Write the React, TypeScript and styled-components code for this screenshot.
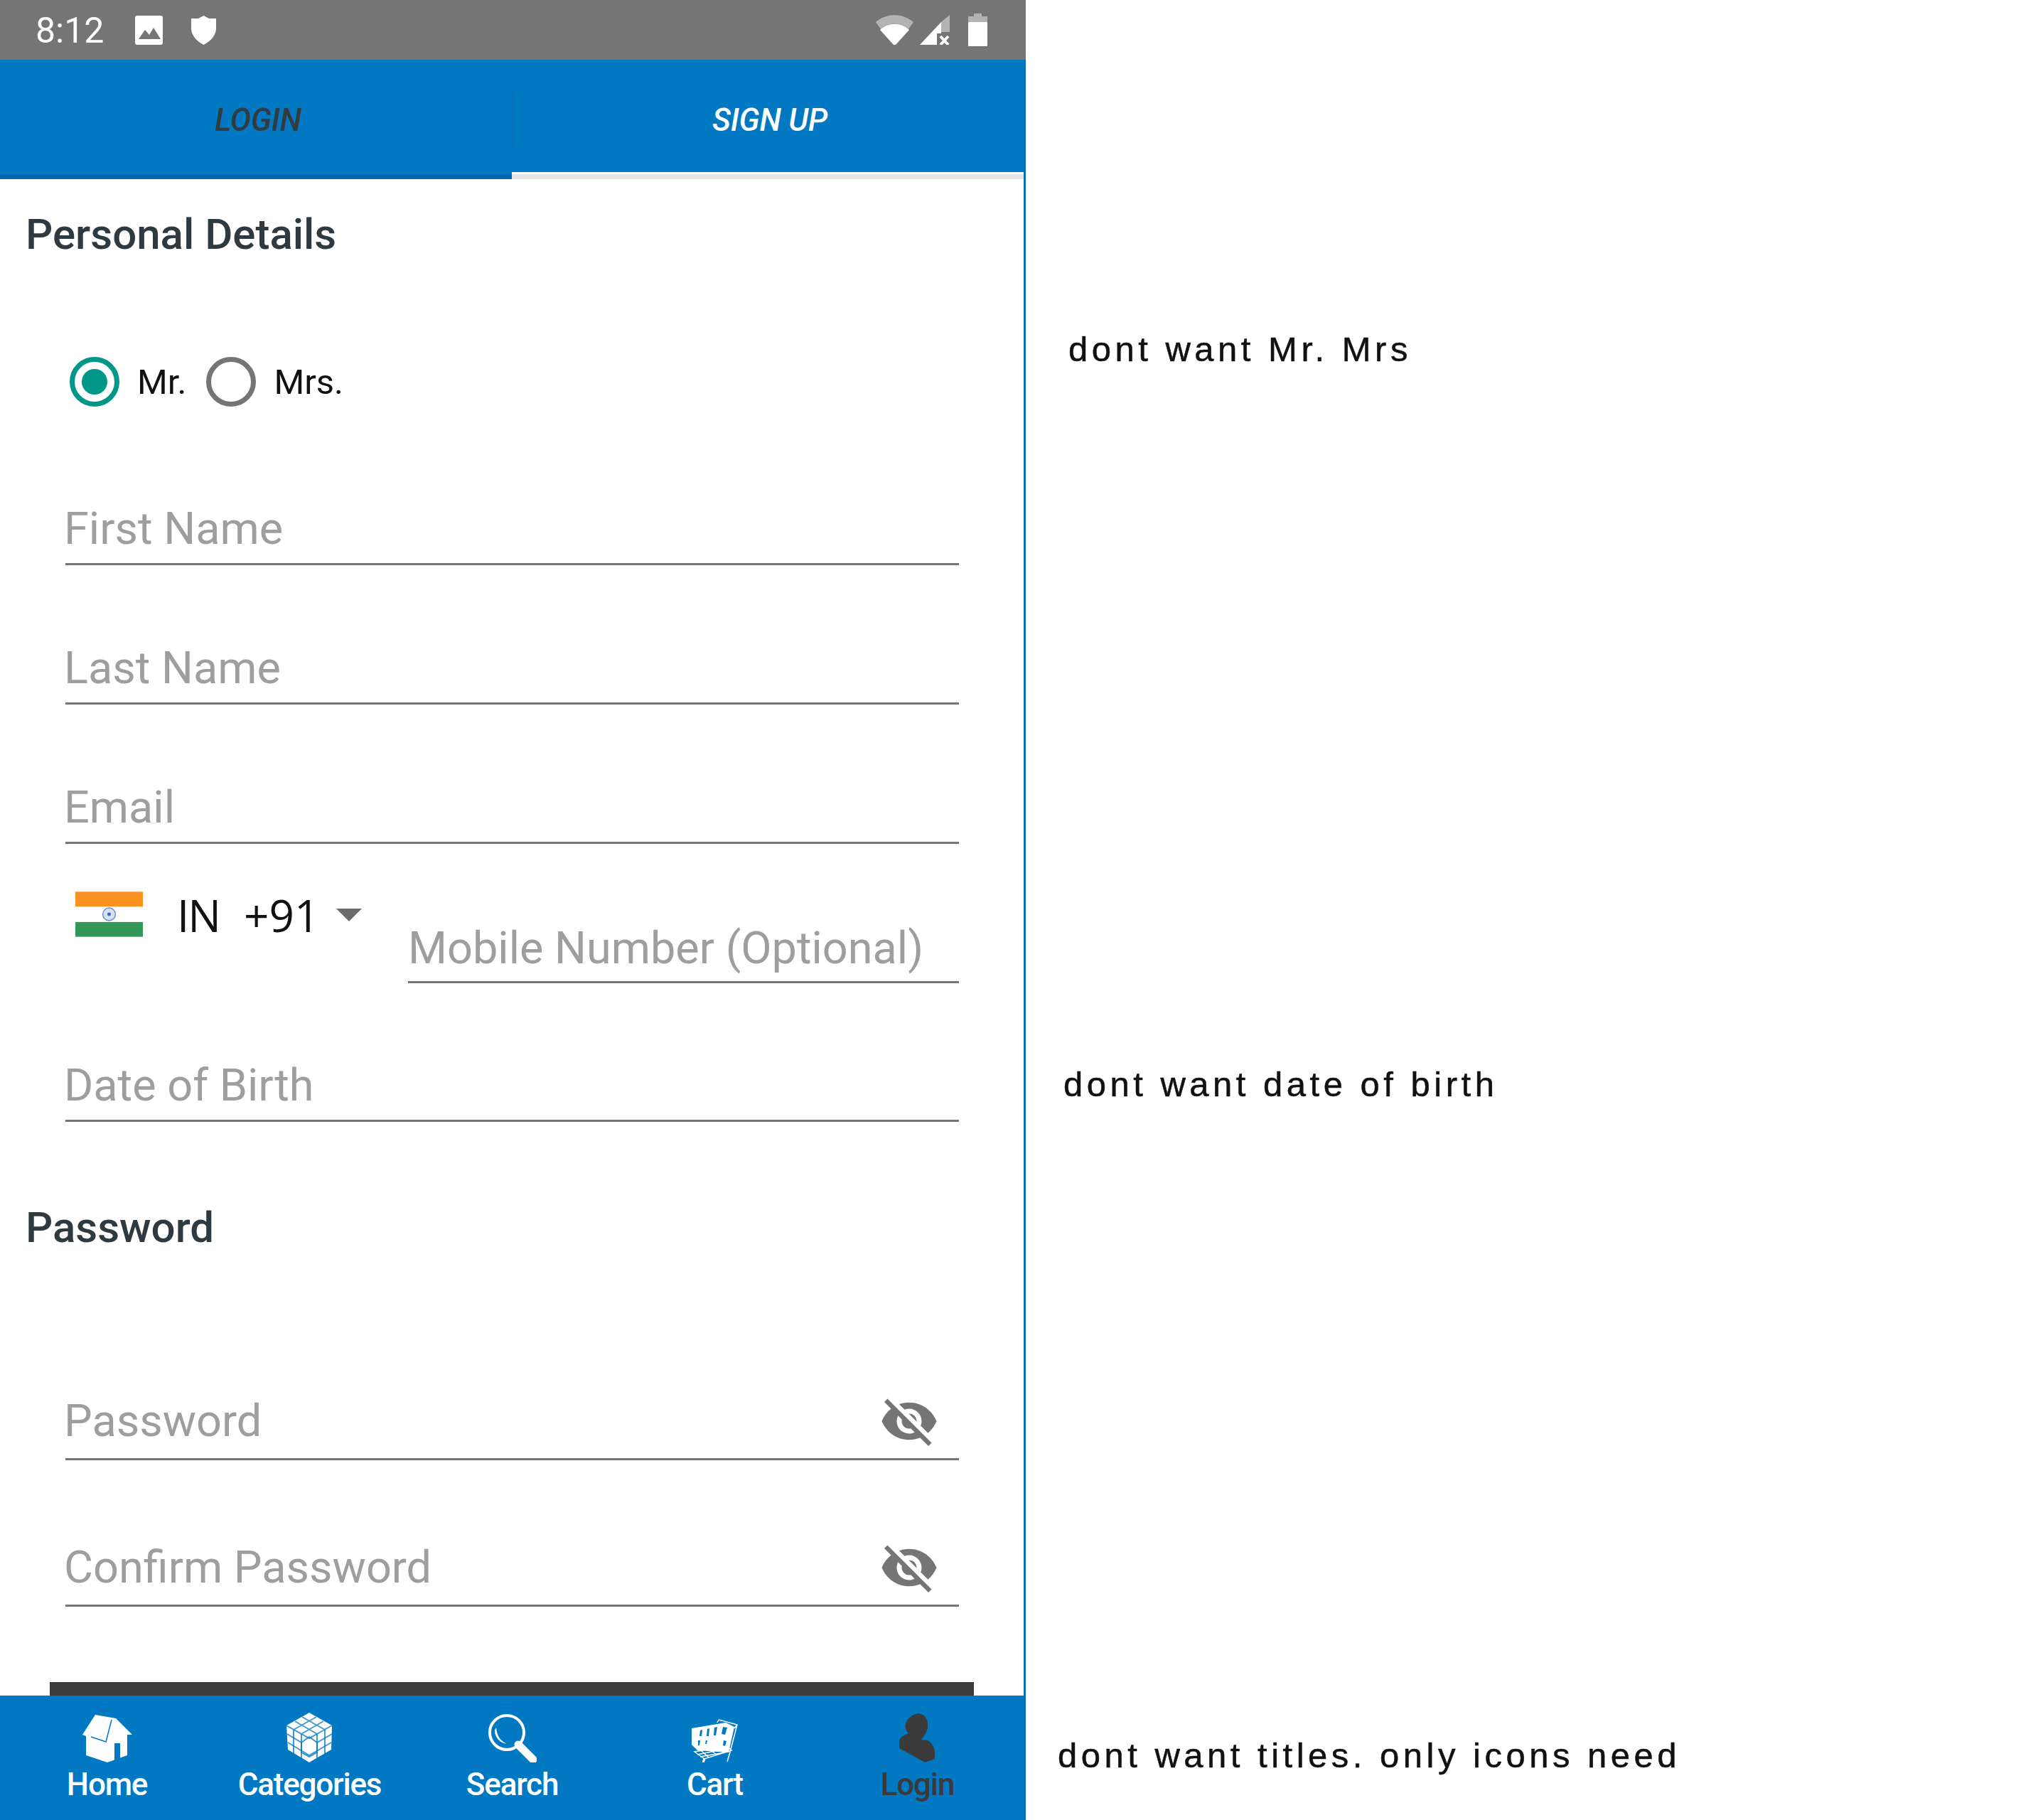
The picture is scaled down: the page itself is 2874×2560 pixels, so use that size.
import React from "react";
import styled, { createGlobalStyle } from "styled-components";
import { MdVisibilityOff } from "react-icons/md";

const Global = createGlobalStyle`
  html, body { margin: 0; padding: 0; background: #fff; }
  * { box-sizing: border-box; }
`;

const Page = styled.div`
  width: 2874px;
  height: 2560px;
  display: flex;
  overflow: hidden;
  background: #fff;
  font-family: Roboto, sans-serif;
`;

const Phone = styled.div`
  width: 1443px;
  height: 2560px;
  flex-shrink: 0;
  display: flex;
  flex-direction: column;
  border-right: 3px solid #0a72ba;
`;

const StatusBar = styled.div`
  height: 84px;
  flex-shrink: 0;
  background: #757575;
  display: flex;
  align-items: center;
  padding: 0 51px 0 50px;
  margin-right: -3px;
  color: #fff;
`;

const Clock = styled.span`
  font-size: 50px;
  line-height: 1;
  width: 140px;
  margin-top: 2px;
`;

const StatusLeftIcon = styled.svg`
  display: block;
  margin-right: 40px;
`;

const StatusRight = styled.div`
  margin-left: auto;
  margin-right: 3px;
  display: flex;
  align-items: center;
  gap: 9px;
`;

const BatteryIcon = styled.svg`
  display: block;
  margin-left: 17px;
`;

const Tabs = styled.div`
  height: 168px;
  flex-shrink: 0;
  display: flex;
`;

const Tab = styled.div<{ $active?: boolean }>`
  position: relative;
  flex: 1;
  display: flex;
  align-items: center;
  justify-content: center;
  padding: 2px 0 0 6px;
  background: #0078c2;
  font-size: 44px;
  font-style: italic;
  font-weight: 500;
  letter-spacing: -0.2px;
  color: ${(p) => (p.$active ? "#ffffff" : "#333b40")};
  box-shadow: ${(p) =>
    p.$active
      ? "inset 0 -7px 0 #e5e3e5, inset 0 -10px 0 #ffffff"
      : "inset 0 -7px 0 #0066b0"};
  &::before {
    content: "";
    display: ${(p) => (p.$active ? "block" : "none")};
    position: absolute;
    left: 0;
    top: 40px;
    bottom: 42px;
    width: 2px;
    background: #0a72ba;
  }
`;

const Form = styled.div`
  flex: 1;
  min-height: 0;
  overflow: hidden;
  display: flex;
  flex-direction: column;
  align-items: flex-start;
  padding-top: 42px;
`;

const Heading = styled.h2<{ $top?: number }>`
  flex-shrink: 0;
  margin: ${(p) => p.$top ?? 0}px 0 0 36px;
  font-size: 60px;
  line-height: 72px;
  font-weight: 500;
  color: #2f3a40;
`;

const RadioRow = styled.div`
  flex-shrink: 0;
  display: flex;
  align-items: center;
  margin: 136px 0 0 98px;
  height: 70px;
`;

const Radio = styled.span<{ $checked?: boolean }>`
  width: 70px;
  height: 70px;
  border-radius: 50%;
  border: 7px solid ${(p) => (p.$checked ? "#009688" : "#757575")};
  display: flex;
  align-items: center;
  justify-content: center;
  &::after {
    content: "";
    width: 36px;
    height: 36px;
    border-radius: 50%;
    background: ${(p) => (p.$checked ? "#009688" : "transparent")};
  }
`;

const RadioLabel = styled.span`
  font-size: 49px;
  color: #111;
  margin: 0 28px 0 25px;
`;

const Field = styled.div<{ $top: number; $withIcon?: boolean }>`
  flex-shrink: 0;
  align-self: stretch;
  margin: ${(p) => p.$top}px 91px 0 92px;
  height: 100px;
  border-bottom: 3px solid #757575;
  display: flex;
  align-items: center;
  justify-content: space-between;
  font-size: 63px;
  color: #9e9e9e;
  padding-bottom: ${(p) => (p.$withIcon ? "8px" : "0")};
  text-indent: -2px;
`;

const EyeSlot = styled.span`
  display: flex;
  margin-right: 28px;
  color: #757575;
`;

const PhoneRow = styled.div`
  flex-shrink: 0;
  align-self: stretch;
  display: flex;
  align-items: flex-start;
  margin: 67px 91px 0 106px;
  height: 129px;
`;

const Flag = styled.svg`
  display: block;
  flex-shrink: 0;
`;

const DialCode = styled.span`
  font-family: "Open Sans", sans-serif;
  font-size: 62px;
  line-height: 66px;
  color: #111;
  margin-left: 48px;
  word-spacing: 18px;
  white-space: nowrap;
`;

const CountryCode = styled.span`
  letter-spacing: -2px;
`;

const Caret = styled.span`
  width: 0;
  height: 0;
  border-left: 18px solid transparent;
  border-right: 18px solid transparent;
  border-top: 18px solid #6b6b6b;
  margin: 24px 0 0 24px;
`;

const MobileField = styled.div`
  margin-left: auto;
  width: 775px;
  height: 100px;
  margin-top: 29px;
  border-bottom: 3px solid #757575;
  display: flex;
  align-items: center;
  font-size: 63px;
  color: #9e9e9e;
  padding-top: 4px;
  white-space: nowrap;
`;

const SubmitButton = styled.div`
  flex-shrink: 0;
  align-self: center;
  margin-top: 106px;
  width: 1300px;
  height: 90px;
  background: #3b3b3b;
`;

const BottomNav = styled.nav`
  height: 175px;
  flex-shrink: 0;
  background: #0078c2;
  display: grid;
  grid-template-columns: repeat(5, 285px);
  padding: 24px 8px 0;
`;

const NavItem = styled.div<{ $dark?: boolean }>`
  display: flex;
  flex-direction: column;
  align-items: center;
  color: ${(p) => (p.$dark ? "#3a3a3a" : "#ffffff")};
  font-size: 44px;
  font-weight: 500;
  letter-spacing: -1.2px;
  line-height: 52px;
`;

const NavIconBox = styled.div`
  height: 70px;
  margin-bottom: 5px;
  display: flex;
  align-items: flex-end;
`;

const Notes = styled.div`
  flex: 1;
  display: flex;
  flex-direction: column;
`;

const Note = styled.p<{ $top: number; $left: number }>`
  margin: ${(p) => p.$top}px 0 0 ${(p) => p.$left}px;
  font-family: "Liberation Sans", Arial, sans-serif;
  font-size: 49px;
  line-height: 60px;
  letter-spacing: 5.5px;
  color: #111;
  -webkit-text-stroke: 0.5px #111;
  white-space: nowrap;
`;

const HouseIcon = () => (
  <svg width="70" height="67" viewBox="0 0 70 67">
    <path fill="#fff" d="M0 28 18 0 47 5 70 28 63 28 63 57 35 67 5 57 5 30Z" />
    <path fill="none" stroke="#0078c2" strokeWidth="1.5" d="M12 31 33 38 41 7" />
    <rect x="45" y="40" width="8" height="24" fill="#0078c2" />
  </svg>
);

const CubeIcon = () => (
  <svg width="65" height="70" viewBox="0 0 65 70">
    <path fill="#fff" d="M32 0 64 18 63 52 32 70 2 52 0 18Z" />
    <g fill="none" stroke="#0078c2" strokeOpacity=".75" strokeWidth="2">
      <path d="M22 6 54 24M12 12 43 30M42 6 10 24M52 12 21 30M0 18 32 36 64 18" />
      <path d="M10 24 10 58M21 30 21 64M43 30 43 64M54 24 54 58" />
      <path d="M1 30 21 42 32 34 43 42 64 30M2 42 32 60 63 42" />
      <path d="M21 42 21 56 32 62 43 56 43 42" />
    </g>
  </svg>
);

const SearchIcon = () => (
  <svg width="69" height="69" viewBox="0 0 69 69">
    <circle cx="27" cy="27" r="24" fill="none" stroke="#fff" strokeWidth="4" />
    <path d="M10 24C10 34 18 42 27 43 19 39 13 33 12 20Z" fill="#fff" />
    <path d="M43 44 64 65" stroke="#fff" strokeWidth="11" strokeLinecap="round" />
  </svg>
);

const CartIcon = () => (
  <svg width="65" height="61" viewBox="0 0 65 61">
    <path fill="#fff" d="M0 13 48 5 60 11 52 47 8 44 0 36Z" />
    <g fill="#0078c2">
      <path d="M12 16 15 15 14 24 11 24ZM22 14 25 13 24 24 21 24ZM32 12 36 11 34 23 31 23ZM44 11 50 12 47 22 42 21Z" />
      <path d="M9 30 12 30 11 37 9 37ZM20 30 22 30 21 35 19 35ZM45 30 49 31 47 38 44 37Z" />
    </g>
    <g fill="none" stroke="#fff" strokeWidth="1.5">
      <path d="M38 1 64 8 53 50 50 60M38 1 36 5M64 8 60 13" />
      <path d="M4 46 50 38 56 44 18 56 4 46ZM8 50 48 42M12 53 52 46M14 45 24 54M26 43 36 51M36 41 46 48" />
      <path d="M18 56 16 61" strokeWidth="3" />
    </g>
  </svg>
);

const PersonIcon = () => (
  <svg width="52" height="69" viewBox="0 0 52 69">
    <path
      fill="#3a3a3a"
      d="M28 0C38 2 41 11 40 20 39 27 34 33 31 37 33 38 37 37 40 38 46 42 50 48 50 54L50 64 36 69 0 49 0 38C2 33 8 30 13 28 9 24 8 20 9 16 10 8 18 1 28 0Z"
    />
  </svg>
);

const Eye = () => (
  <EyeSlot>
    <MdVisibilityOff size={84} />
  </EyeSlot>
);

export default function App() {
  return (
    <Page>
      <Global />
      <Phone>
        <StatusBar>
          <Clock>8:12</Clock>
          <StatusLeftIcon width="39" height="41" viewBox="0 0 39 41">
            <rect width="39" height="41" rx="3" fill="#fff" />
            <path fill="#757575" d="M5 33 14 20 20 27 26 17 36 33Z" />
          </StatusLeftIcon>
          <StatusLeftIcon width="35" height="41" viewBox="0 0 35 41">
            <path fill="#fff" d="M17.5 0 25 4 35 4 35 18C35 28 27 36 17.5 41 8 36 0 28 0 18L0 4 10 4Z" />
          </StatusLeftIcon>
          <StatusRight>
            <svg width="53" height="42" viewBox="0 0 53 42">
              <path fill="#b3b3b3" d="M0 10C15-3 38-3 53 10L46 20C35 10 18 10 7 20Z" />
              <path fill="#fff" d="M6 21C17 10 36 10 47 21L28 42 25 42Z" />
            </svg>
            <svg width="42" height="42" viewBox="0 0 42 42">
              <path fill="#fff" d="M0 42 30 10 30 26 24 26 24 42Z" />
              <path fill="#b3b3b3" d="M30 10 42 0 42 24 30 24Z" />
              <path stroke="#fff" strokeWidth="4" d="M29 30 40 42M40 30 29 42" />
            </svg>
            <BatteryIcon width="27" height="46" viewBox="0 0 27 46">
              <path fill="#b3b3b3" d="M8 0H19V4H27V12H0V4H8Z" />
              <rect y="12" width="27" height="34" rx="1" fill="#fff" />
            </BatteryIcon>
          </StatusRight>
        </StatusBar>
        <Tabs>
          <Tab>LOGIN</Tab>
          <Tab $active>SIGN UP</Tab>
        </Tabs>
        <Form>
          <Heading>Personal Details</Heading>
          <RadioRow>
            <Radio $checked />
            <RadioLabel>Mr.</RadioLabel>
            <Radio />
            <RadioLabel>Mrs.</RadioLabel>
          </RadioRow>
          <Field $top={123}>First Name</Field>
          <Field $top={96}>Last Name</Field>
          <Field $top={96}>Email</Field>
          <PhoneRow>
            <Flag width="95" height="64" viewBox="0 0 96 64">
              <rect width="96" height="22" fill="#fb9220" />
              <rect y="21" width="96" height="22" fill="#fff" />
              <rect y="43" width="96" height="21" fill="#339755" />
              <circle cx="48" cy="32" r="9" fill="#d5e0f3" stroke="#6d8cc6" strokeWidth="1.5" />
              <circle cx="48" cy="32" r="2.5" fill="#3766b5" />
            </Flag>
            <DialCode><CountryCode>IN</CountryCode> +91</DialCode>
            <Caret />
            <MobileField>Mobile Number (Optional)</MobileField>
          </PhoneRow>
          <Field $top={95}>Date of Birth</Field>
          <Heading $top={113}>Password</Heading>
          <Field $top={191} $withIcon>
            Password
            <Eye />
          </Field>
          <Field $top={106} $withIcon>
            Confirm Password
            <Eye />
          </Field>
          <SubmitButton />
        </Form>
        <BottomNav>
          <NavItem>
            <NavIconBox><HouseIcon /></NavIconBox>
            Home
          </NavItem>
          <NavItem>
            <NavIconBox><CubeIcon /></NavIconBox>
            Categories
          </NavItem>
          <NavItem>
            <NavIconBox><SearchIcon /></NavIconBox>
            Search
          </NavItem>
          <NavItem>
            <NavIconBox><CartIcon /></NavIconBox>
            Cart
          </NavItem>
          <NavItem $dark>
            <NavIconBox><PersonIcon /></NavIconBox>
            Login
          </NavItem>
        </BottomNav>
      </Phone>
      <Notes>
        <Note $top={461} $left={60}>dont want Mr. Mrs</Note>
        <Note $top={974} $left={53}>dont want date of birth</Note>
        <Note $top={884} $left={45}>dont want titles. only icons need</Note>
      </Notes>
    </Page>
  );
}
